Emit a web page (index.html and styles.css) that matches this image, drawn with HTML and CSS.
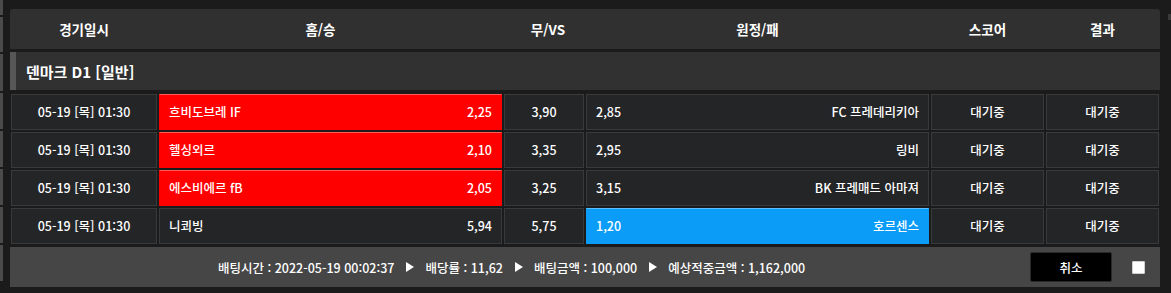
FILE: index.html
```html
<!DOCTYPE html>
<html lang="ko">
<head>
<meta charset="utf-8">
<title>Bet slip</title>
<link rel="stylesheet" href="styles.css">
</head>
<body>
<div class="page">
  <div class="edge">
    <span class="seg s1"></span><span class="seg s2"></span><span class="seg s3"></span><span class="seg s4"></span><span class="seg s4"></span><span class="seg s4"></span><span class="seg s4"></span><span class="seg s4"></span>
  </div>
  <div class="board">
    <div class="thead cols">
      <div class="th">경기일시</div>
      <div class="th th-home">홈/승</div>
      <div class="th th-draw">무/VS</div>
      <div class="th">원정/패</div>
      <div class="th">스코어</div>
      <div class="th">결과</div>
    </div>
    <div class="league"><span class="league-name">덴마크 D1 [일반]</span></div>
    <div class="rows">
      <div class="row cols">
        <div class="cell c-date">05-19 [목] 01:30</div>
        <div class="cell c-home sel-red"><span>흐비도브레 IF</span><span>2,25</span></div>
        <div class="cell c-draw">3,90</div>
        <div class="cell c-away"><span>2,85</span><span>FC 프레데리키아</span></div>
        <div class="cell c-center">대기중</div>
        <div class="cell c-center">대기중</div>
      </div>
      <div class="row cols">
        <div class="cell c-date">05-19 [목] 01:30</div>
        <div class="cell c-home sel-red"><span>헬싱외르</span><span>2,10</span></div>
        <div class="cell c-draw">3,35</div>
        <div class="cell c-away"><span>2,95</span><span>링비</span></div>
        <div class="cell c-center">대기중</div>
        <div class="cell c-center">대기중</div>
      </div>
      <div class="row cols">
        <div class="cell c-date">05-19 [목] 01:30</div>
        <div class="cell c-home sel-red"><span>에스비에르 fB</span><span>2,05</span></div>
        <div class="cell c-draw">3,25</div>
        <div class="cell c-away"><span>3,15</span><span>BK 프레매드 아마져</span></div>
        <div class="cell c-center">대기중</div>
        <div class="cell c-center">대기중</div>
      </div>
      <div class="row cols">
        <div class="cell c-date">05-19 [목] 01:30</div>
        <div class="cell c-home"><span>니쾨빙</span><span>5,94</span></div>
        <div class="cell c-draw">5,75</div>
        <div class="cell c-away sel-blue"><span>1,20</span><span>호르센스</span></div>
        <div class="cell c-center">대기중</div>
        <div class="cell c-center">대기중</div>
      </div>
    </div>
    <div class="footer">
      <div class="summary">
        <span>배팅시간 : 2022-05-19 00:02:37</span>
        <span class="tri"></span>
        <span>배당률 : 11,62</span>
        <span class="tri"></span>
        <span>배팅금액 : 100,000</span>
        <span class="tri"></span>
        <span>예상적중금액 : 1,162,000</span>
      </div>
      <button class="cancel" type="button">취소</button>
      <span class="check"></span>
    </div>
  </div>
  <div class="redge"><span class="rbit"></span></div>
</div>
</body>
</html>
```

FILE: styles.css
```css
* { box-sizing: border-box; }
html, body { margin: 0; padding: 0; }
body {
  background: #1b1b1b;
  width: 1171px;
  height: 293px;
  overflow: hidden;
  font-family: "Noto Sans CJK KR", "Noto Sans", sans-serif;
  color: #ffffff;
}
.page {
  display: flex;
  height: 293px;
}
.edge {
  width: 3px;
  display: flex;
  flex-direction: column;
  gap: 2px;
}
.seg { background: #4b4b4b; display: block; }
.s1 { height: 15px; }
.s2 { height: 35px; }
.s3 { height: 37px; }
.s4 { height: 36px; }
.board {
  margin-left: 7px;
  width: 1150px;
  padding-top: 9px;
}
.cols {
  display: grid;
  grid-template-columns: 146px 343px 80px 343px 113px 113px;
  column-gap: 2px;
}
.thead {
  height: 40px;
  background: #303030;
  border-radius: 3px 3px 0 0;
  padding-left: 1px;
  align-items: center;
}
.th {
  text-align: center;
  font-size: 13.5px;
  font-weight: 700;
  line-height: 16px;
}
.th-home { padding-right: 20px; }
.th-draw { padding-left: 8px; }
.league {
  margin-top: 3px;
  height: 38px;
  background: #313131;
  border-left: 6px solid #575757;
  display: flex;
  align-items: center;
  padding-left: 10px;
}
.league-name {
  font-size: 15px;
  font-weight: 700;
}
.rows {
  margin-top: 4px;
  padding-left: 1px;
  display: flex;
  flex-direction: column;
  gap: 2px;
}
.row { height: 36px; }
.cell {
  background: #242527;
  border: 1px solid #393a3c;
  font-size: 12.5px;
  font-weight: 500;
  display: flex;
  align-items: center;
  line-height: 16px;
}
.c-date, .c-draw, .c-center { justify-content: center; }
.c-home, .c-away {
  justify-content: space-between;
  padding: 0 9px 0 9px;
}
.sel-red {
  background: #ff0000;
  border-color: #ff0000;
  border-top-color: #ff5a5a;
}
.sel-blue {
  background: #0a9cf7;
  border-color: #0a9cf7;
  border-top-color: #5cc0ff;
}
.footer {
  margin-top: 3px;
  height: 40px;
  background: #464646;
  display: flex;
  align-items: center;
  padding-left: 208px;
  padding-right: 15px;
}
.summary {
  display: flex;
  align-items: center;
  gap: 8px;
  font-size: 12.5px;
  font-weight: 500;
}
.tri {
  width: 0;
  height: 0;
  border-top: 5px solid transparent;
  border-bottom: 5px solid transparent;
  border-left: 8px solid #ffffff;
  margin: 0 3px 0 4px;
}
.cancel {
  margin-left: auto;
  width: 82px;
  height: 30px;
  background: #000000;
  border: 1px solid #2a2a2a;
  border-radius: 2px;
  color: #ffffff;
  font-family: inherit;
  font-size: 12.5px;
  font-weight: 500;
  padding: 0;
}
.check {
  width: 13px;
  height: 13px;
  background: #ffffff;
  border: 1px solid #cfcfcf;
  border-radius: 1px;
  margin-left: 20px;
}
.redge {
  margin-left: 8px;
  width: 3px;
  padding-top: 14px;
}
.rbit {
  display: block;
  width: 3px;
  height: 6px;
  background: #3a3a3a;
}
```
